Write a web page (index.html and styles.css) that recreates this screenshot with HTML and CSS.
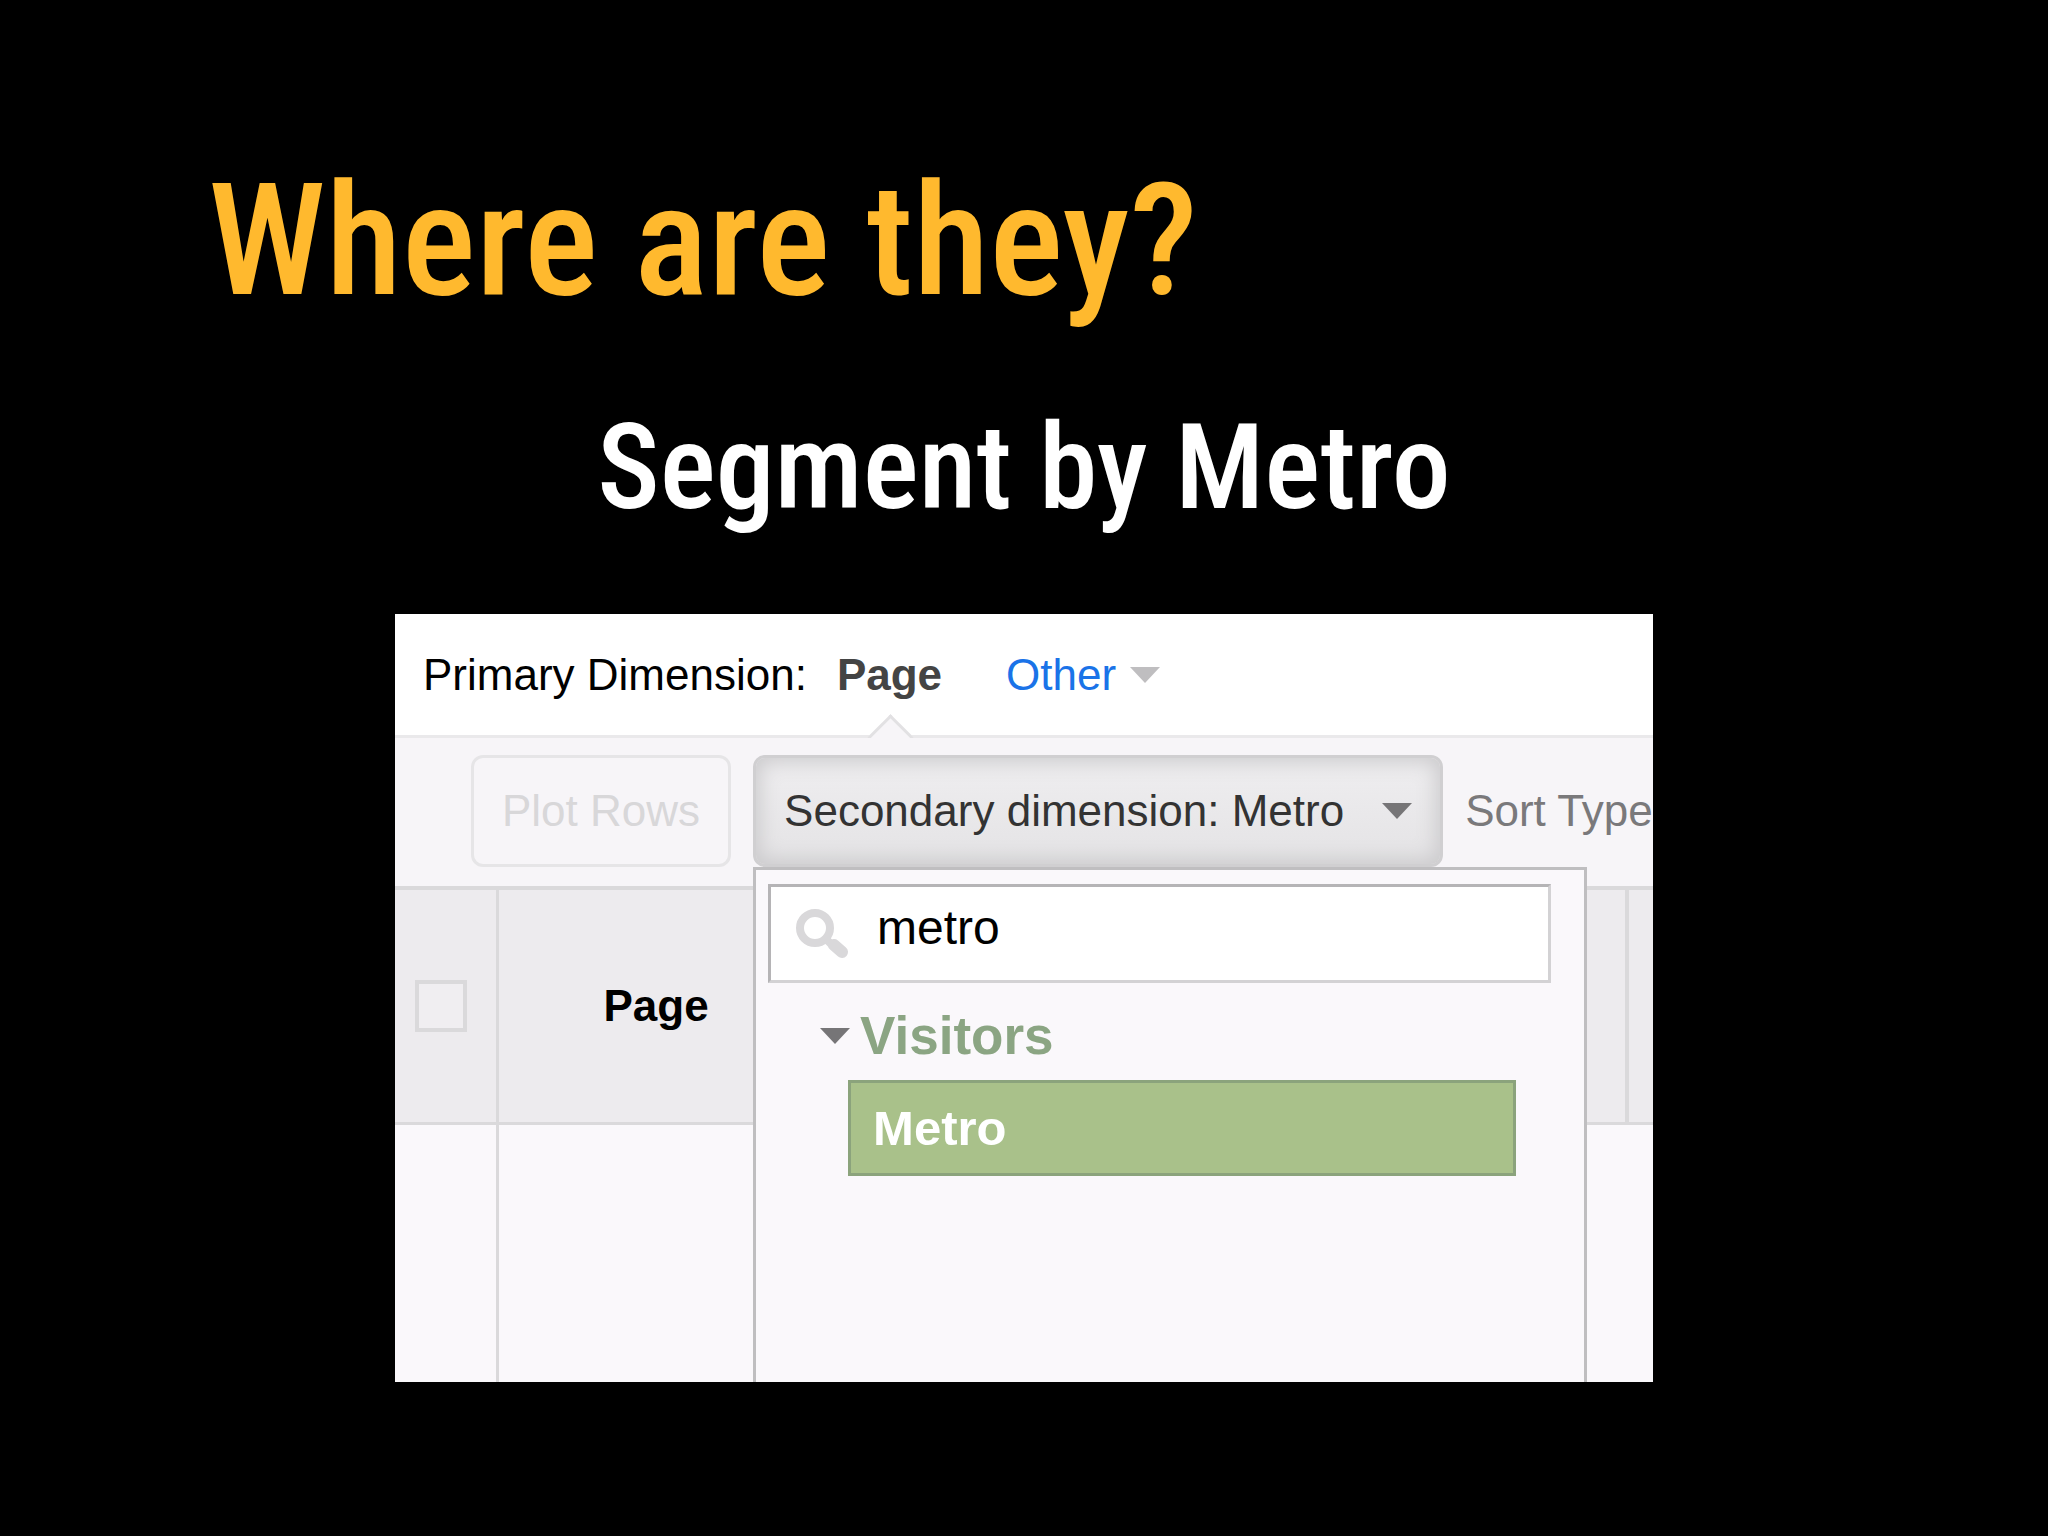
FILE: index.html
```html
<!doctype html>
<html lang="en">
<head>
  <meta charset="UTF-8">
  <meta name="viewport" content="width=device-width, initial-scale=1.0">

  <title>Where are they?</title>

  <link rel="stylesheet" href="styles.css">
</head>

<body>
  <main class="slide">
    <h1 class="slide-title">Where are they?</h1>
    <h2 class="slide-subtitle">Segment by Metro</h2>

    <section class="report">
      <nav class="dimensions">
        <span class="dimensions-label">Primary Dimension:</span>
        <strong class="dimension-current">Page</strong>
        <a class="dimension-other" href="#">
          Other
          <svg class="arrow arrow-light" viewBox="0 0 30 16" aria-hidden="true"><path d="M0 0h30L15 16z"/></svg>
        </a>
      </nav>

      <div class="toolbar">
        <button class="button" type="button" disabled>Plot Rows</button>

        <div class="dropdown">
          <button class="button button-pressed" type="button" aria-expanded="true">
            Secondary dimension: Metro
            <svg class="arrow" viewBox="0 0 30 16" aria-hidden="true"><path d="M0 0h30L15 16z"/></svg>
          </button>

          <div class="menu">
            <label class="search">
              <svg class="search-icon" viewBox="0 0 54 50" role="img" aria-label="Search">
                <circle cx="20" cy="19" r="15"/>
                <path class="search-neck" d="M31 30l6 6"/>
                <path class="search-handle" d="M39 36l8 7"/>
              </svg>
              <input class="search-input" type="text" value="metro">
            </label>

            <button class="group" type="button" aria-expanded="true">
              <svg class="arrow" viewBox="0 0 30 16" aria-hidden="true"><path d="M0 0h30L15 16z"/></svg>
              Visitors
            </button>

            <button class="option" type="button">Metro</button>
          </div>
        </div>

        <span class="sort">Sort Type</span>
      </div>

      <table class="grid">
        <thead>
          <tr>
            <th class="grid-check"><input class="checkbox" type="checkbox" aria-label="Select all rows"></th>
            <th class="grid-page">Page</th>
            <th class="grid-rest"></th>
          </tr>
        </thead>
        <tbody>
          <tr>
            <td class="grid-check"></td>
            <td></td>
            <td></td>
          </tr>
        </tbody>
      </table>
    </section>
  </main>
</body>
</html>
```
FILE: styles.css
```css
*{
  box-sizing: border-box;
}

body{
  margin: 0;
  color: #fff;
  font-family: "Liberation Sans", Arial, sans-serif;
  font-size: 44px;
  background-color: #000;
}

button, input{
  margin: 0;
  font-family: inherit;
  font-size: inherit;
}

.slide{
  padding: 141px 0 154px;
}

.slide-title, .slide-subtitle{
  margin: 0;
  font-family: "Roboto Condensed", "Liberation Sans Narrow", "Arial Narrow", sans-serif;
  font-weight: 500;
  white-space: nowrap;
}

.slide-title{
  padding-left: 208px;
  color: #ffb92e;
  font-size: 156px;
  line-height: 200px;
}

.slide-subtitle{
  margin: 50px 0 69px;
  font-size: 118px;
  line-height: 154px;
  text-align: center;
}

/* report panel */
.report{
  width: 1258px;
  max-width: 100%;
  margin: 0 auto;
  overflow: hidden;
  color: #000;
  background: #faf8fb;
}

.arrow{
  flex: none;
  width: 30px;
  height: 16px;
  fill: #767577;
}

.arrow-light{
  fill: #bfbec0;
}

.dimensions{
  display: flex;
  align-items: center;
  height: 124px;
  padding-left: 28px;
  border-bottom: 3px solid #eae9eb;
  background: #fff;
  white-space: nowrap;
}

.dimension-current{
  position: relative;
  margin: 0 64px 0 30px;
  color: #444;
}

/* notch that points at the current dimension */
.dimension-current::after{
  content: "";
  position: absolute;
  top: 100%;
  left: 50%;
  width: 30px;
  height: 30px;
  margin: 21px 0 0 -15px;
  border: 3px solid #e2e1e3;
  border-right: 0;
  border-bottom: 0;
  background: #f7f5f8;
  transform: rotate(45deg);
}

.dimension-other{
  display: flex;
  align-items: center;
  gap: 14px;
  color: #1a73e8;
  text-decoration: none;
}

.toolbar{
  position: relative;
  display: flex;
  align-items: center;
  gap: 22px;
  height: 152px;
  padding: 0 0 2px 76px;
  border-bottom: 4px solid #dad9db;
  background: #f7f5f8;
  white-space: nowrap;
}

.button{
  display: flex;
  align-items: center;
  gap: 38px;
  height: 112px;
  padding: 0 28px;
  border: 3px solid #e6e5e7;
  border-radius: 12px;
  color: #d8d7d9;
  background: #f7f5f8;
}

.button-pressed{
  border-color: #d0cfd1;
  color: #333;
  background: linear-gradient(#efeef0, #e4e3e5);
  box-shadow: inset 0 0 20px 4px #cbcacc;
}

.dropdown{
  position: relative;
}

.menu{
  position: absolute;
  top: 100%;
  left: 0;
  z-index: 1;
  width: 834px;
  height: 540px;
  padding: 14px 33px 0 12px;
  border: 3px solid #bfbec0;
  background: #faf8fb;
}

.search{
  display: flex;
  align-items: center;
  height: 99px;
  padding-left: 24px;
  border: 3px solid #d3d2d4;
  border-top-color: #b5b4b6;
  border-left-color: #b5b4b6;
  background: #fff;
}

.search-icon{
  width: 54px;
  height: 50px;
  fill: none;
  stroke: #d9d8da;
  stroke-width: 8;
}

.search-handle{
  stroke-width: 12;
  stroke-linecap: round;
}

.search-input{
  flex: 1;
  min-width: 0;
  padding: 0 0 12px 28px;
  border: 0;
  outline: 0;
  color: #000;
  font-size: 48px;
  background: none;
}

.group{
  display: flex;
  align-items: center;
  gap: 10px;
  height: 97px;
  padding: 8px 0 0 52px;
  border: 0;
  color: #8ba583;
  font-size: 53px;
  font-weight: 700;
  background: none;
}

.option{
  display: block;
  width: 668px;
  height: 96px;
  margin-left: 80px;
  padding: 0 22px;
  border: 3px solid #8ba37c;
  color: #fff;
  font-size: 49px;
  font-weight: 700;
  text-align: left;
  background: #a9c18a;
}

.sort{
  color: #7a797b;
}

.grid{
  width: 100%;
  border-collapse: collapse;
  table-layout: fixed;
}

.grid th{
  height: 233px;
  padding: 0;
  border-bottom: 3px solid #dad9db;
  background: #edebee;
}

.grid td{
  height: 259px;
  padding: 0;
}

.grid .grid-check{
  width: 102px;
  border-right: 3px solid #dad9db;
}

.grid .grid-page{
  padding-left: 105px;
  border-right: 4px solid #dad9db;
  text-align: left;
}

.grid-rest{
  width: 26px;
}

.checkbox{
  display: block;
  width: 52px;
  height: 52px;
  margin: 0 0 0 20px;
  border: 4px solid #dad9db;
  background: #f0eef1;
  appearance: none;
}
```
